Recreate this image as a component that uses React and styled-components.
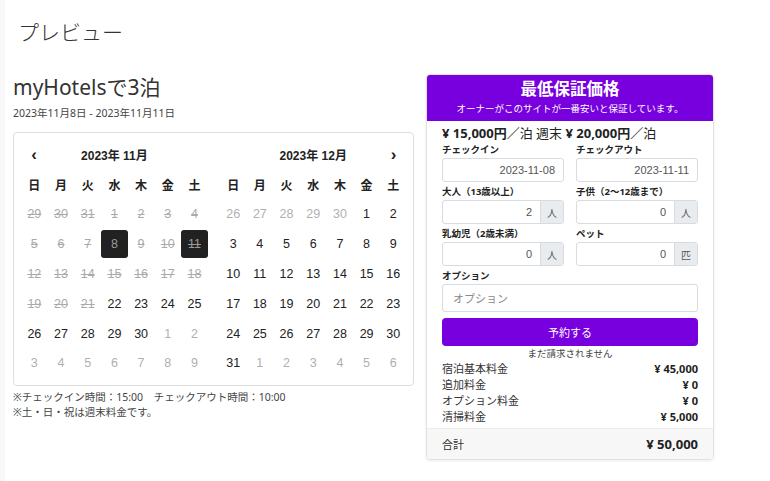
import styled, { createGlobalStyle, css } from "styled-components";

const GlobalStyle = createGlobalStyle`
	body {
		margin: 0;
		background: #fff;
		font-family: "Noto Sans", "Noto Sans CJK JP", sans-serif;
		color: #333;
	}
`;

const Page = styled.div`
	width: 770px;
	height: 481px;
	box-sizing: border-box;
	border-left: 5px solid #f8f8f8;
	padding: 16px 0 0 8px;
`;

const PageTitle = styled.h1`
	margin: 0 0 24px 5px;
	font-size: 21px;
	font-weight: 300;
	line-height: 32px;
	color: #333;
`;

const Columns = styled.div`
	display: flex;
	gap: 12px;
	align-items: flex-start;
`;

const LeftCol = styled.div`
	width: 401px;
	margin-top: 1px;
`;

const HotelName = styled.h2`
	margin: 0;
	font-size: 21px;
	font-weight: 400;
	line-height: 28px;
	color: #333;
`;

const Dates = styled.div`
	font-size: 10.5px;
	color: #444;
	margin: 4px 0 12px;
`;

const CalendarCard = styled.div`
	border: 1px solid #dedede;
	border-radius: 4px;
	padding: 7px 6px 7px 7px;
	display: flex;
	gap: 12px;
	font-family: "Liberation Sans", "Noto Sans CJK JP", sans-serif;
`;

const Month = styled.div`
	display: grid;
	grid-template-columns: repeat(7, 26.7px);
	grid-auto-rows: 29.8px;
	align-items: center;
	justify-items: center;
`;

const MonthHead = styled.div`
	grid-column: 1 / -1;
	width: 100%;
	display: flex;
	align-items: center;
	justify-content: space-between;
	font-size: 12px;
	font-weight: 700;
	color: #222;
`;

const Arrow = styled.span`
	width: 26px;
	text-align: center;
	font-size: 17px;
	font-weight: 700;
	visibility: ${(p) => (p.$hidden ? "hidden" : "visible")};
`;

const WeekDay = styled.div`
	font-size: 12px;
	font-weight: 700;
	color: #222;
`;

const Day = styled.div`
	width: 27px;
	height: 28px;
	display: flex;
	align-items: center;
	justify-content: center;
	font-size: 12.5px;
	border-radius: 3px;
	color: ${(p) => (p.$muted ? "#b0b0b0" : "#222")};
	${(p) => p.$struck && css`
		color: #aaa;
		text-decoration: line-through;
	`}
	${(p) => p.$selected && css`
		background: #212121;
		color: #999;
	`}
`;

const Notes = styled.div`
	margin-top: 4px;
	font-size: 10.5px;
	line-height: 15px;
	color: #444;
`;

const BookCard = styled.div`
	width: 286px;
	margin-top: 2px;
	border: 1px solid #e2e2e2;
	border-radius: 4px;
	box-shadow: 0 1px 3px rgba(0, 0, 0, 0.08);
	overflow: hidden;
`;

const BookHead = styled.div`
	background: #7800de;
	color: #fff;
	text-align: center;
	height: 46px;
	padding-top: 2px;
	box-sizing: border-box;
`;

const BookTitle = styled.div`
	font-size: 16.5px;
	font-weight: 700;
	line-height: 24px;
`;

const BookSub = styled.div`
	font-size: 9.5px;
	line-height: 16px;
`;

const BookBody = styled.div`
	padding: 2px 15px 3px;
`;

const PriceLine = styled.div`
	font-size: 13px;
	line-height: 20px;
	color: #222;
	b {
		font-weight: 700;
	}
`;

const FieldGrid = styled.div`
	display: grid;
	grid-template-columns: 1fr 1fr;
	column-gap: 12px;
	row-gap: 3px;
`;

const Field = styled.div`
	grid-column: ${(p) => (p.$wide ? "1 / -1" : "auto")};
`;

const Label = styled.div`
	font-size: 9.5px;
	font-weight: 700;
	line-height: 14px;
	margin-bottom: 1px;
	color: #222;
`;

const InputGroup = styled.div`
	display: flex;
	height: ${(p) => p.$h || 24}px;
	border: 1px solid #d8dbe0;
	border-radius: 3px;
	overflow: hidden;
	box-sizing: border-box;
`;

const InputText = styled.div`
	flex: 1;
	display: flex;
	align-items: center;
	justify-content: ${(p) => (p.$left ? "flex-start" : "flex-end")};
	padding: 0 ${(p) => (p.$left ? "0 0 10px" : "8px 0 0")};
	font-size: 11px;
	color: ${(p) => (p.$placeholder ? "#888" : "#555")};
	font-family: "Liberation Sans", "Noto Sans CJK JP", sans-serif;
`;

const Addon = styled.div`
	width: 22px;
	background: #e9ecef;
	border-left: 1px solid #d8dbe0;
	display: flex;
	align-items: center;
	justify-content: center;
	font-size: 10px;
	color: #555;
`;

const BookButton = styled.div`
	margin-top: 6px;
	height: 28px;
	border-radius: 4px;
	background: #7800de;
	color: #fff;
	font-size: 11px;
	display: flex;
	align-items: center;
	justify-content: center;
`;

const Notice = styled.div`
	text-align: center;
	font-size: 9.5px;
	line-height: 14px;
	margin-top: 1px;
	color: #444;
`;

const FeeRow = styled.div`
	display: flex;
	justify-content: space-between;
	font-size: 11px;
	line-height: 16px;
	color: #333;
	b {
		font-weight: 700;
		color: #222;
	}
`;

const TotalRow = styled.div`
	display: flex;
	justify-content: space-between;
	align-items: center;
	height: 30px;
	padding: 0 15px;
	background: #f7f7f7;
	border-top: 1px solid #ececec;
	font-size: 11px;
	color: #333;
	b {
		font-size: 13px;
		font-weight: 700;
		color: #222;
	}
`;

const weekdays = ["日", "月", "火", "水", "木", "金", "土"];

const nov = [
	[29, "s"], [30, "s"], [31, "s"], [1, "s"], [2, "s"], [3, "s"], [4, "s"],
	[5, "s"], [6, "s"], [7, "s"], [8, "sel"], [9, "s"], [10, "s"], [11, "sels"],
	[12, "s"], [13, "s"], [14, "s"], [15, "s"], [16, "s"], [17, "s"], [18, "s"],
	[19, "s"], [20, "s"], [21, "s"], [22], [23], [24], [25],
	[26], [27], [28], [29], [30], [1, "m"], [2, "m"],
	[3, "m"], [4, "m"], [5, "m"], [6, "m"], [7, "m"], [8, "m"], [9, "m"],
];

const dec = [
	[26, "m"], [27, "m"], [28, "m"], [29, "m"], [30, "m"], [1], [2],
	[3], [4], [5], [6], [7], [8], [9],
	[10], [11], [12], [13], [14], [15], [16],
	[17], [18], [19], [20], [21], [22], [23],
	[24], [25], [26], [27], [28], [29], [30],
	[31], [1, "m"], [2, "m"], [3, "m"], [4, "m"], [5, "m"], [6, "m"],
];

const MonthView = ({ title, days, prev, next }) => (
	<Month>
		<MonthHead>
			<Arrow $hidden={!prev}>‹</Arrow>
			<span>{title}</span>
			<Arrow $hidden={!next}>›</Arrow>
		</MonthHead>
		{weekdays.map((w) => (
			<WeekDay key={w}>{w}</WeekDay>
		))}
		{days.map(([d, f], i) => (
			<Day
				key={i}
				$muted={f === "m"}
				$struck={f === "s" || f === "sels"}
				$selected={f === "sel" || f === "sels"}
			>
				{d}
			</Day>
		))}
	</Month>
);

const fees = [
	["宿泊基本料金", "¥ 45,000"],
	["追加料金", "¥ 0"],
	["オプション料金", "¥ 0"],
	["清掃料金", "¥ 5,000"],
];

const App = () => {
	return (
		<Page>
			<GlobalStyle />
			<PageTitle>プレビュー</PageTitle>
			<Columns>
				<LeftCol>
					<HotelName>myHotelsで3泊</HotelName>
					<Dates>2023年11月8日 - 2023年11月11日</Dates>
					<CalendarCard>
						<MonthView title="2023年 11月" days={nov} prev />
						<MonthView title="2023年 12月" days={dec} next />
					</CalendarCard>
					<Notes>
						※チェックイン時間：15:00　チェックアウト時間：10:00
						<br />
						※土・日・祝は週末料金です。
					</Notes>
				</LeftCol>
				<BookCard>
					<BookHead>
						<BookTitle>最低保証価格</BookTitle>
						<BookSub>オーナーがこのサイトが一番安いと保証しています。</BookSub>
					</BookHead>
					<BookBody>
						<PriceLine>
							<b>¥ 15,000円</b>／泊 週末 <b>¥ 20,000円</b>／泊
						</PriceLine>
						<FieldGrid>
							<Field>
								<Label>チェックイン</Label>
								<InputGroup>
									<InputText>2023-11-08</InputText>
								</InputGroup>
							</Field>
							<Field>
								<Label>チェックアウト</Label>
								<InputGroup>
									<InputText>2023-11-11</InputText>
								</InputGroup>
							</Field>
							<Field>
								<Label>大人（13歳以上）</Label>
								<InputGroup>
									<InputText>2</InputText>
									<Addon>人</Addon>
								</InputGroup>
							</Field>
							<Field>
								<Label>子供（2〜12歳まで）</Label>
								<InputGroup>
									<InputText>0</InputText>
									<Addon>人</Addon>
								</InputGroup>
							</Field>
							<Field>
								<Label>乳幼児（2歳未満）</Label>
								<InputGroup>
									<InputText>0</InputText>
									<Addon>人</Addon>
								</InputGroup>
							</Field>
							<Field>
								<Label>ペット</Label>
								<InputGroup>
									<InputText>0</InputText>
									<Addon>匹</Addon>
								</InputGroup>
							</Field>
							<Field $wide>
								<Label>オプション</Label>
								<InputGroup $h={28}>
									<InputText $left $placeholder>オプション</InputText>
								</InputGroup>
							</Field>
						</FieldGrid>
						<BookButton>予約する</BookButton>
						<Notice>まだ請求されません</Notice>
						{fees.map(([k, v]) => (
							<FeeRow key={k}>
								<span>{k}</span>
								<b>{v}</b>
							</FeeRow>
						))}
					</BookBody>
					<TotalRow>
						<span>合計</span>
						<b>¥ 50,000</b>
					</TotalRow>
				</BookCard>
			</Columns>
		</Page>
	);
};

export default App;
